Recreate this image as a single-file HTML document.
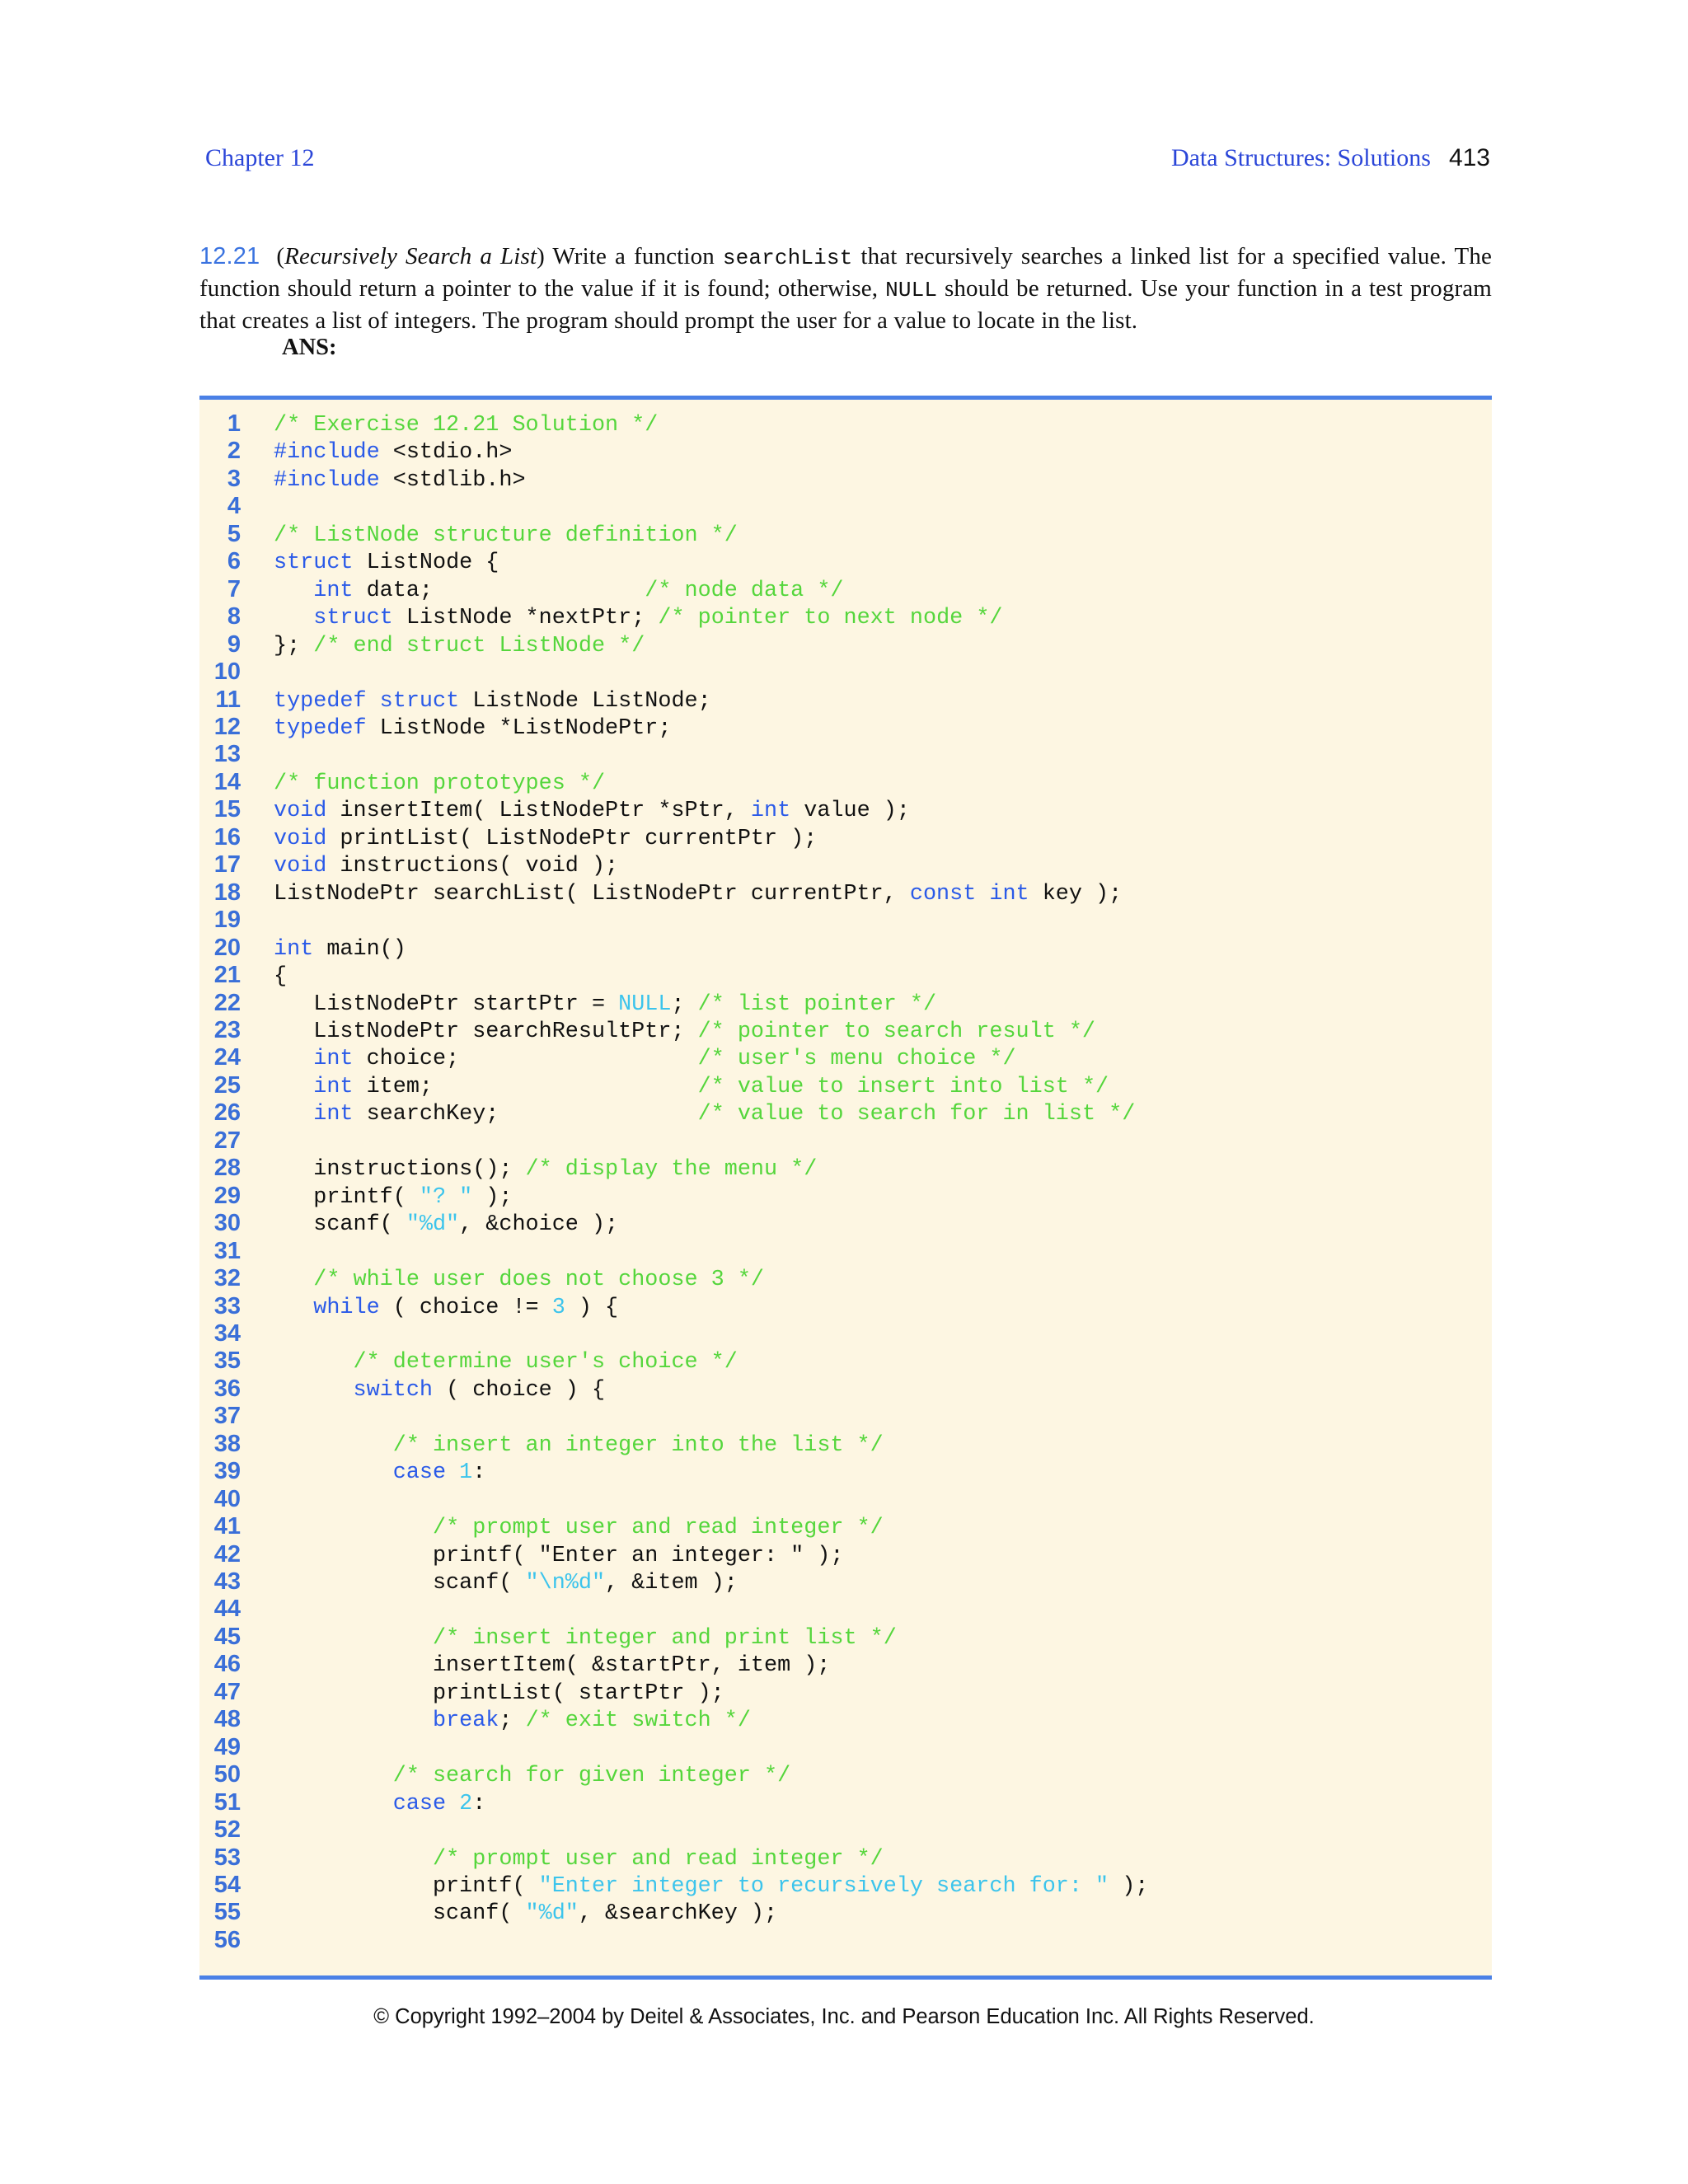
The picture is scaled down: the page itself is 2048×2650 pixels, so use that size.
<!DOCTYPE html>
<html><head><meta charset="utf-8">
<style>
html,body{margin:0;padding:0;background:#fff;}
body{width:2048px;height:2650px;position:relative;overflow:hidden;font-family:"Liberation Serif",serif;color:#111;}
.hdr{position:absolute;top:175px;font-size:30px;color:#2b46d8;}
.pn{color:#111;font-family:"Liberation Sans",sans-serif;margin-left:22px;}
.para{position:absolute;left:242px;top:293px;width:1568px;font-size:29px;line-height:37.2px;text-align:justify;letter-spacing:0.15px;}
.para .num{color:#3a73e0;font-family:"Liberation Sans",sans-serif;margin-right:20px;}
.mono{font-family:"Liberation Mono",monospace;font-size:26px;}
.ans{position:absolute;left:342px;top:406px;font-size:28.5px;font-weight:bold;}
.topline{position:absolute;left:242px;top:480px;width:1568px;height:5px;background:#4a80e6;}
.box{position:absolute;left:242px;top:485px;width:1568px;height:1913px;background:#fdf6e2;}
.botline{position:absolute;left:242px;top:2397px;width:1568px;height:5px;background:#4a80e6;}
.nums{position:absolute;left:232px;top:498px;width:60px;text-align:right;font-family:"Liberation Sans",sans-serif;font-weight:bold;font-size:29px;line-height:33.45px;color:#3a6fd8;margin:0;}
pre.code{position:absolute;left:332px;top:500px;margin:0;font-family:"Liberation Mono",monospace;font-size:26.8px;line-height:33.45px;color:#111;}
.c{color:#55d63c}.k{color:#2a5ae8}.s{color:#3cc4ec}
.copy{position:absolute;left:0;width:2048px;top:2433px;text-align:center;font-family:"Liberation Sans",sans-serif;font-size:25.5px;color:#111;}
</style></head><body>
<div class="hdr" style="left:249px;">Chapter 12</div>
<div class="hdr" style="right:240px;">Data Structures: Solutions<span class="pn">413</span></div>
<div class="para"><span class="num">12.21</span>(<i>Recursively Search a List</i>) Write a function <span class="mono">searchList</span> that recursively searches a linked list for a specified value. The function should return a pointer to the value if it is found; otherwise, <span class="mono">NULL</span> should be returned. Use your function in a test program that creates a list of integers. The program should prompt the user for a value to locate in the list.</div>
<div class="ans">ANS:</div>
<div class="topline"></div>
<div class="box"></div>
<div class="botline"></div>
<pre class="nums">1
2
3
4
5
6
7
8
9
10
11
12
13
14
15
16
17
18
19
20
21
22
23
24
25
26
27
28
29
30
31
32
33
34
35
36
37
38
39
40
41
42
43
44
45
46
47
48
49
50
51
52
53
54
55
56</pre>
<pre class="code"><span class="c">/* Exercise 12.21 Solution */</span>
<span class="k">#include</span> &lt;stdio.h&gt;
<span class="k">#include</span> &lt;stdlib.h&gt;

<span class="c">/* ListNode structure definition */</span>
<span class="k">struct</span> ListNode {
   <span class="k">int</span> data;                <span class="c">/* node data */</span>
   <span class="k">struct</span> ListNode *nextPtr; <span class="c">/* pointer to next node */</span>
}; <span class="c">/* end struct ListNode */</span>

<span class="k">typedef</span> <span class="k">struct</span> ListNode ListNode;
<span class="k">typedef</span> ListNode *ListNodePtr;

<span class="c">/* function prototypes */</span>
<span class="k">void</span> insertItem( ListNodePtr *sPtr, <span class="k">int</span> value );
<span class="k">void</span> printList( ListNodePtr currentPtr );
<span class="k">void</span> instructions( void );
ListNodePtr searchList( ListNodePtr currentPtr, <span class="k">const</span> <span class="k">int</span> key );

<span class="k">int</span> main()
{
   ListNodePtr startPtr = <span class="s">NULL</span>; <span class="c">/* list pointer */</span>
   ListNodePtr searchResultPtr; <span class="c">/* pointer to search result */</span>
   <span class="k">int</span> choice;                  <span class="c">/* user's menu choice */</span>
   <span class="k">int</span> item;                    <span class="c">/* value to insert into list */</span>
   <span class="k">int</span> searchKey;               <span class="c">/* value to search for in list */</span>

   instructions(); <span class="c">/* display the menu */</span>
   printf( <span class="s">"? "</span> );
   scanf( <span class="s">"%d"</span>, &amp;choice );

   <span class="c">/* while user does not choose 3 */</span>
   <span class="k">while</span> ( choice != <span class="s">3</span> ) {

      <span class="c">/* determine user's choice */</span>
      <span class="k">switch</span> ( choice ) {

         <span class="c">/* insert an integer into the list */</span>
         <span class="k">case</span> <span class="s">1</span>:

            <span class="c">/* prompt user and read integer */</span>
            printf( "Enter an integer: " );
            scanf( <span class="s">"\n%d"</span>, &amp;item );

            <span class="c">/* insert integer and print list */</span>
            insertItem( &amp;startPtr, item );
            printList( startPtr );
            <span class="k">break</span>; <span class="c">/* exit switch */</span>

         <span class="c">/* search for given integer */</span>
         <span class="k">case</span> <span class="s">2</span>:

            <span class="c">/* prompt user and read integer */</span>
            printf( <span class="s">"Enter integer to recursively search for: "</span> );
            scanf( <span class="s">"%d"</span>, &amp;searchKey );
</pre>
<div class="copy">© Copyright 1992–2004 by Deitel &amp; Associates, Inc. and Pearson Education Inc. All Rights Reserved.</div>
</body></html>
